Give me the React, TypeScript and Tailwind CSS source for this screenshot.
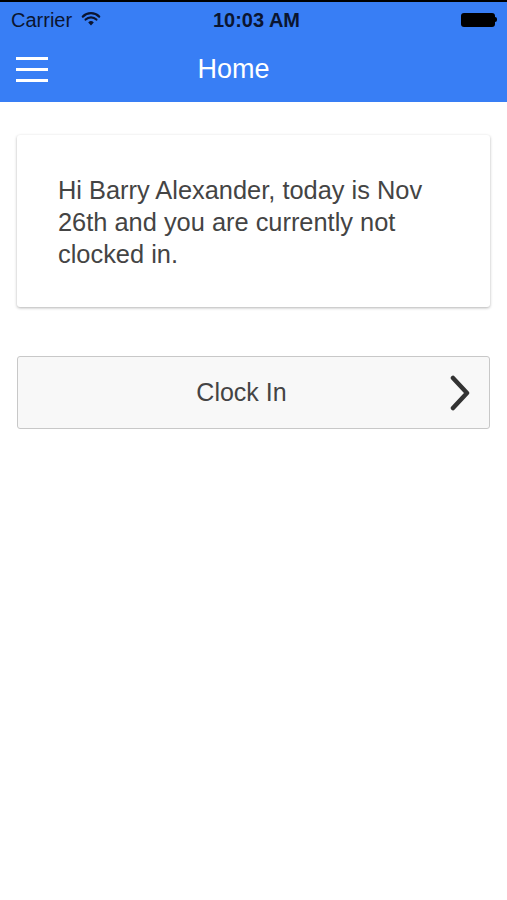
import React from "react";

export default function App() {
  return (
    <div className="w-[507px] h-[900px] bg-white overflow-hidden" style={{ fontFamily: '"Liberation Sans", Arial, sans-serif' }}>
      <div className="bg-[#387ef5] border-t-2 border-black">
        <div className="h-[35px] relative flex items-center pl-[11px] pr-[10px] text-[20px] text-[#0b1530]">
          <span>Carrier</span>
          <svg className="ml-[9px]" width="20" height="15" viewBox="0 0 20 15">
            <path d="M10 13.5 L7.2 10.4 A4 4 0 0 1 12.8 10.4 Z" fill="#0b1530" />
            <path d="M4.6 7.6 A7.6 7.6 0 0 1 15.4 7.6" stroke="#0b1530" strokeWidth="2.2" fill="none" strokeLinecap="round" />
            <path d="M1.8 4.6 A11.6 11.6 0 0 1 18.2 4.6" stroke="#0b1530" strokeWidth="2.2" fill="none" strokeLinecap="round" />
          </svg>
          <span className="absolute left-[6px] right-0 text-center font-bold text-[20px] text-[#0b1530] pointer-events-none">10:03 AM</span>
          <div className="ml-auto flex items-center">
            <div className="w-[34px] h-[14px] bg-black rounded-[3px]" />
            <div className="w-[2px] h-[5px] bg-black rounded-r-sm" />
          </div>
        </div>
        <div className="h-[65px] relative flex items-center px-4">
          <div className="flex flex-col gap-[8px] w-[32px]">
            <div className="h-[3px] bg-white" />
            <div className="h-[3px] bg-white" />
            <div className="h-[3px] bg-white" />
          </div>
          <div className="absolute left-0 right-[40px] top-[17px] text-center text-white text-[27px] leading-[30px]">Home</div>
        </div>
      </div>
      <div className="px-[17px] pt-[33px]">
        <div className="bg-white rounded-[3px] shadow-[0_1px_3px_rgba(0,0,0,0.3)] px-[41px] pt-[39px] pb-[37px] text-[25.4px] leading-[32px] text-[#444]">
          Hi Barry Alexander, today is Nov 26th and you are currently not clocked in.
        </div>
        <div className="mt-[49px] h-[73px] bg-[#f8f8f8] border border-[#c8c8c8] rounded-[3px] relative flex items-center justify-center">
          <span className="text-[25px] text-[#444] mr-[24px]">Clock In</span>
          <svg className="absolute right-[18px] top-1/2 -translate-y-1/2" width="22" height="36" viewBox="0 0 22 36">
            <path d="M4 3 L18 18 L4 33" stroke="#333" strokeWidth="4.5" fill="none" strokeLinecap="round" strokeLinejoin="round" />
          </svg>
        </div>
      </div>
    </div>
  );
}
